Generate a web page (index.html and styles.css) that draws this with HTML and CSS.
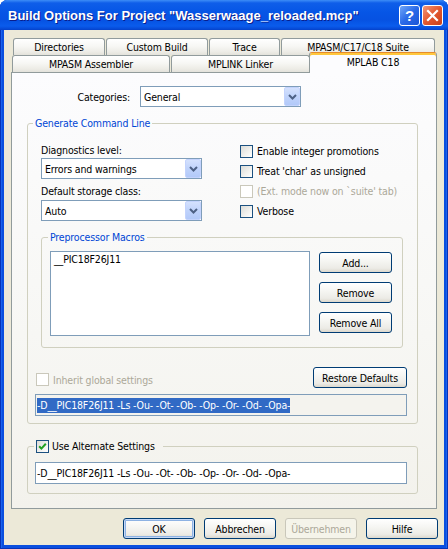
FILE: index.html
```html
<!DOCTYPE html>
<html>
<head>
<meta charset="utf-8">
<link rel="stylesheet" href="styles.css">
</head>
<body>
<div class="window">
  <div class="titlebar">
    <span class="title">Build Options For Project "Wasserwaage_reloaded.mcp"</span>
    <div class="tbtns">
      <span class="tb help">?</span>
      <span class="tb close"><svg width="19" height="19" viewBox="0 0 19 19"><path d="M5 5 L14 14 M14 5 L5 14" stroke="#fff" stroke-width="2.2" stroke-linecap="square" fill="none"/></svg></span>
    </div>
  </div>
  <div class="client">
    <div class="tabs">
      <div class="tabrow row1">
        <div class="tab t-dir">Directories</div>
        <div class="tab t-cust">Custom Build</div>
        <div class="tab t-trace">Trace</div>
        <div class="tab t-suite">MPASM/C17/C18 Suite</div>
      </div>
      <div class="tabrow row2">
        <div class="tab t-asm">MPASM Assembler</div>
        <div class="tab t-link">MPLINK Linker</div>
        <div class="tab sel t-c18">MPLAB C18</div>
      </div>
    </div>
    <div class="panel">
      <div class="cat-row">
        <span class="cat-label">Categories:</span>
        <div class="combo cat-combo"><span class="combo-text">General</span><span class="dd"><svg width="9" height="6" viewBox="0 0 9 6"><path d="M1 1 L4.5 4.5 L8 1" stroke="#4D6185" stroke-width="2" fill="none"/></svg></span></div>
      </div>

      <fieldset class="group gen">
        <legend class="lg-gen">Generate Command Line</legend>
        <div class="gen-top">
          <div class="leftcol">
            <div class="lbl">Diagnostics level:</div>
            <div class="combo small-combo c1"><span class="combo-text">Errors and warnings</span><span class="dd"><svg width="9" height="6" viewBox="0 0 9 6"><path d="M1 1 L4.5 4.5 L8 1" stroke="#4D6185" stroke-width="2" fill="none"/></svg></span></div>
            <div class="lbl l2">Default storage class:</div>
            <div class="combo small-combo c2"><span class="combo-text">Auto</span><span class="dd"><svg width="9" height="6" viewBox="0 0 9 6"><path d="M1 1 L4.5 4.5 L8 1" stroke="#4D6185" stroke-width="2" fill="none"/></svg></span></div>
          </div>
          <div class="rightcol">
            <div class="cbline"><span class="cb"></span><span>Enable integer promotions</span></div>
            <div class="cbline"><span class="cb"></span><span>Treat 'char' as unsigned</span></div>
            <div class="cbline dis"><span class="cb dis"></span><span>(Ext. mode now on `suite' tab)</span></div>
            <div class="cbline"><span class="cb"></span><span>Verbose</span></div>
          </div>
        </div>

        <fieldset class="group macros">
          <legend class="lg-mac">Preprocessor Macros</legend>
          <div class="macros-body">
            <div class="listbox"><div class="item">__PIC18F26J11</div></div>
            <div class="btncol">
              <div class="btn">Add...</div>
              <div class="btn">Remove</div>
              <div class="btn">Remove All</div>
            </div>
          </div>
        </fieldset>

        <div class="inherit-row">
          <div class="cbline dis inh"><span class="cb dis"></span><span>Inherit global settings</span></div>
          <div class="btn restore">Restore Defaults</div>
        </div>
        <div class="field ro"><span class="sel-text">-D__PIC18F26J11 -Ls -Ou- -Ot- -Ob- -Op- -Or- -Od- -Opa-</span></div>
      </fieldset>

      <fieldset class="group alt">
        <legend class="lg-alt"><span class="cb checked"><svg width="11" height="11" viewBox="0 0 11 11"><path d="M2.2 5.2 L4.4 7.6 L8.8 2.8" stroke="#21A121" stroke-width="2" fill="none"/></svg></span><span>Use Alternate Settings</span></legend>
        <div class="field">-D__PIC18F26J11 -Ls -Ou- -Ot- -Ob- -Op- -Or- -Od- -Opa-</div>
      </fieldset>
    </div>
    <div class="dlg-buttons">
      <div class="btn dlg default">OK</div>
      <div class="btn dlg">Abbrechen</div>
      <div class="btn dlg disabled">Übernehmen</div>
      <div class="btn dlg">Hilfe</div>
    </div>
  </div>
</div>
</body>
</html>
```
FILE: styles.css
```css
* { box-sizing: border-box; }
html, body { margin: 0; padding: 0; }
body {
  width: 448px;
  height: 549px;
  overflow: hidden;
  background: #ffffff;
  font-family: "DejaVu Sans Condensed", "Liberation Sans", sans-serif;
  font-size: 10.5px;
  letter-spacing: -0.15px;
  color: #000;
}
.window {
  width: 448px;
  height: 549px;
  display: flex;
  flex-direction: column;
  background: #0A4FDF;
  border-radius: 8px 8px 0 0;
  box-shadow: inset 1px 0 #0733B8, inset -1px 0 #0733B8, inset 0 -1px #0733B8, inset 2px 0 #1A63EC, inset -2px 0 #1A63EC;
}
.titlebar {
  height: 30px;
  flex: none;
  display: flex;
  align-items: center;
  border-radius: 7px 7px 0 0;
  background: linear-gradient(to bottom, #3D8DF7 0, #0F5EE9 3px, #0656E6 12px, #0652E2 20px, #0A5CEC 26px, #0649D6 29px, #0541C8 30px);
}
.title {
  padding-left: 8px;
  color: #fff;
  font-family: "Liberation Sans", sans-serif;
  font-weight: bold;
  font-size: 13px;
  letter-spacing: 0;
  white-space: nowrap;
  text-shadow: 1px 1px #0A1E8C;
}
.tbtns {
  margin-left: auto;
  margin-right: 5px;
  display: flex;
  gap: 2px;
}
.tb {
  width: 21px;
  height: 21px;
  border: 1px solid #fff;
  border-radius: 3px;
  display: flex;
  align-items: center;
  justify-content: center;
}
.help {
  background: linear-gradient(135deg, #6FA6F8 0%, #2A6AE8 50%, #1C55D6 100%);
  color: #fff;
  font-family: "Liberation Sans", sans-serif;
  font-weight: bold;
  font-size: 15px;
  letter-spacing: 0;
}
.close {
  background: linear-gradient(135deg, #F0977A 0%, #E3582F 50%, #C8401A 100%);
}
.client {
  flex: 1;
  margin: 0 4px 4px 4px;
  background: #ECE9D8;
  display: flex;
  flex-direction: column;
}
.tabs {
  margin: 8px 0 0 7px;
}
.tabrow {
  display: flex;
  align-items: flex-start;
}
.row1 { padding-left: 2px; gap: 1px; height: 17px; }
.row2 { padding-left: 1px; gap: 1px; height: 17px; }
.tab {
  height: 17px;
  border: 1px solid #919B9C;
  border-bottom: none;
  border-radius: 3px 3px 0 0;
  background: linear-gradient(to bottom, #FFFFFF 0%, #F7F7F4 45%, #EDECE6 80%, #E3E2DB 100%);
  text-align: center;
  line-height: 16px;
  white-space: nowrap;
}
.t-dir { width: 92px; }
.t-cust { width: 102px; }
.t-trace { width: 71px; }
.t-suite { width: 154px; }
.t-asm { width: 158px; }
.t-link { width: 139px; }
.tab.sel {
  width: 128px;
  height: 21px;
  margin-top: -3px;
  margin-bottom: -1px;
  margin-left: -2px;
  padding-top: 1px;
  background: #FCFCFE;
  border-top: 1px solid #E68B2C;
  box-shadow: inset 0 2px #FFC73C;
  position: relative;
  z-index: 2;
}
.panel {
  margin-left: 7px;
  width: 426px;
  height: 437px;
  border: 1px solid #919B9C;
  background: linear-gradient(to bottom, #FCFCFE 0%, #F7F7F4 60%, #F3F2EC 100%);
}
.cat-row {
  display: flex;
  align-items: center;
  margin: 13px 0 0 0;
}
.cat-label { width: 118px; text-align: right; white-space: nowrap; }
.combo {
  height: 21px;
  border: 1px solid #7F9DB9;
  background: #fff;
  display: flex;
  align-items: center;
  padding-left: 3px;
}
.cat-combo { width: 161px; margin-left: 10px; }
.small-combo { width: 161px; }
.combo-text { white-space: nowrap; }
.dd {
  margin-left: auto;
  width: 16px;
  height: 19px;
  border: 1px solid #C3D3FD;
  border-radius: 2px;
  background: linear-gradient(to bottom, #D4E1FD 0%, #C0D3FB 50%, #B2C9F9 100%);
  display: flex;
  align-items: center;
  justify-content: center;
}
.group {
  border: 1px solid #D0D0BF;
  border-radius: 3px;
  margin: 0;
  padding: 0;
  min-width: 0;
}
.group legend {
  padding: 0 2px;
  line-height: 13px;
  color: #0046D5;
}
.gen {
  margin: 10px 0 0 15px;
  width: 391px;
  padding-bottom: 7px;
}
.lg-gen { margin-left: 5px; }
.gen-top { display: flex; }
.leftcol {
  margin-left: 13px;
  width: 161px;
  padding-top: 14px;
}
.lbl { line-height: 13px; white-space: nowrap; }
.c1 { margin-top: 1px; }
.l2 { margin-top: 6px; }
.c2 { margin-top: 2px; }
.rightcol {
  margin-left: 38px;
  padding-top: 11px;
}
.cbline {
  display: flex;
  align-items: center;
  height: 20px;
  gap: 4px;
  white-space: nowrap;
}
.cbline.dis { color: #ACA899; }
.cb {
  width: 13px;
  height: 13px;
  flex: none;
  border: 1px solid #1C5180;
  background: linear-gradient(135deg, #DCDCD7 0%, #F2F2EF 60%, #FFFFFF 100%);
  display: flex;
  align-items: center;
  justify-content: center;
}
.cb.dis {
  border-color: #CAC8BB;
  background: #fff;
}
.macros {
  margin: 10px 0 0 13px;
  width: 362px;
  padding-bottom: 11px;
}
.lg-mac { margin-left: 6px; }
.macros-body { display: flex; align-items: flex-start; }
.listbox {
  margin: 7px 0 0 8px;
  width: 260px;
  height: 85px;
  border: 1px solid #7F9DB9;
  background: #fff;
}
.item { padding: 1px 3px; line-height: 13px; }
.btncol {
  margin: 8px 0 0 9px;
  display: flex;
  flex-direction: column;
  gap: 9px;
}
.btn {
  width: 73px;
  height: 21px;
  border: 1px solid #003C74;
  border-radius: 3px;
  background: linear-gradient(to bottom, #FFFFFF 0%, #F6F6F3 40%, #ECEBE6 80%, #DCD8CD 100%);
  display: flex;
  align-items: center;
  justify-content: center;
  white-space: nowrap;
}
.inherit-row {
  display: flex;
  align-items: flex-start;
  height: 21px;
  margin: 19px 10px 0 8px;
}
.inh { height: 13px; margin-top: 6px; }
.restore { width: 94px; margin-left: auto; }
.field {
  margin: 6px 0 0 7px;
  width: 372px;
  height: 22px;
  border: 1px solid #7F9DB9;
  background: #fff;
  display: flex;
  align-items: center;
  padding-left: 1px;
  white-space: nowrap;
}
.field.ro { background: #F4F3EE; }
.sel-text {
  background: #316AC5;
  color: #fff;
  line-height: 15px;
}
.alt {
  margin: 16px 0 0 15px;
  width: 391px;
  padding: 0 0 9px 0;
}
.lg-alt {
  margin-left: 6px;
  display: flex;
  align-items: center;
  gap: 3px;
  color: #000 !important;
  padding: 0 8px 0 2px !important;
}
.alt .field { margin-top: 9px; }
.dlg-buttons {
  display: flex;
  justify-content: flex-end;
  gap: 9px;
  margin: 9px 6px 0 0;
}
.btn.dlg { width: 72px; }
.btn.default {
  box-shadow: inset 0 0 0 1px #C6D9F7, inset 0 0 0 2px #8DB2E3;
}
.btn.disabled {
  border-color: #C9C7BA;
  background: #F5F4EA;
  color: #ACA899;
}
```
